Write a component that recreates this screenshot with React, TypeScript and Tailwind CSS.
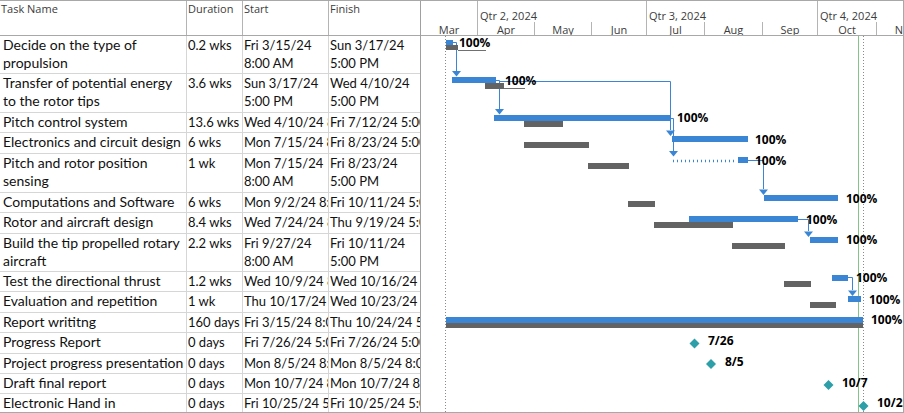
import React from "react";

type Row = {
  name: string[];
  dur: string;
  start: string[];
  finish: string[];
  h: string;
};

const rows: Row[] = [
  { name: ["Decide on the type of", "propulsion"], dur: "0.2 wks", start: ["Fri 3/15/24", "8:00 AM"], finish: ["Sun 3/17/24", "5:00 PM"], h: "h-[38px]" },
  { name: ["Transfer of potential energy", "to the rotor tips"], dur: "3.6 wks", start: ["Sun 3/17/24", "5:00 PM"], finish: ["Wed 4/10/24", "5:00 PM"], h: "h-[39px]" },
  { name: ["Pitch control system"], dur: "13.6 wks", start: ["Wed 4/10/24 8:00 AM"], finish: ["Fri 7/12/24 5:00 PM"], h: "h-[20px]" },
  { name: ["Electronics and circuit design"], dur: "6 wks", start: ["Mon 7/15/24 8:00 AM"], finish: ["Fri 8/23/24 5:00 PM"], h: "h-[21px]" },
  { name: ["Pitch and rotor position", "sensing"], dur: "1 wk", start: ["Mon 7/15/24", "8:00 AM"], finish: ["Fri 8/23/24", "5:00 PM"], h: "h-[39px]" },
  { name: ["Computations and Software"], dur: "6 wks", start: ["Mon 9/2/24 8:00 AM"], finish: ["Fri 10/11/24 5:00 PM"], h: "h-[20px]" },
  { name: ["Rotor and aircraft design"], dur: "8.4 wks", start: ["Wed 7/24/24 8:00 AM"], finish: ["Thu 9/19/24 5:00 PM"], h: "h-[21px]" },
  { name: ["Build the tip propelled rotary", "aircraft"], dur: "2.2 wks", start: ["Fri 9/27/24", "8:00 AM"], finish: ["Fri 10/11/24", "5:00 PM"], h: "h-[38px]" },
  { name: ["Test the directional thrust"], dur: "1.2 wks", start: ["Wed 10/9/24 8:00 AM"], finish: ["Wed 10/16/24 5:00 PM"], h: "h-[20px]" },
  { name: ["Evaluation and repetition"], dur: "1 wk", start: ["Thu 10/17/24 8:00 AM"], finish: ["Wed 10/23/24 5:00 PM"], h: "h-[21px]" },
  { name: ["Report writitng"], dur: "160 days", start: ["Fri 3/15/24 8:00 AM"], finish: ["Thu 10/24/24 5:00 PM"], h: "h-[20px]" },
  { name: ["Progress Report"], dur: "0 days", start: ["Fri 7/26/24 5:00 PM"], finish: ["Fri 7/26/24 5:00 PM"], h: "h-[21px]" },
  { name: ["Project progress presentation"], dur: "0 days", start: ["Mon 8/5/24 8:00 AM"], finish: ["Mon 8/5/24 8:00 AM"], h: "h-[20px]" },
  { name: ["Draft final report"], dur: "0 days", start: ["Mon 10/7/24 8:00 AM"], finish: ["Mon 10/7/24 8:00 AM"], h: "h-[20px]" },
  { name: ["Electronic Hand in"], dur: "0 days", start: ["Fri 10/25/24 5:00 PM"], finish: ["Fri 10/25/24 5:00 PM"], h: "flex-1 border-b-0" },
];

const months = [
  { l: "Mar", w: "w-[56px] border-l-0" },
  { l: "Apr", w: "w-[57px]" },
  { l: "May", w: "w-[57px]" },
  { l: "Jun", w: "w-[55px]" },
  { l: "Jul", w: "w-[58px]" },
  { l: "Aug", w: "w-[58px]" },
  { l: "Sep", w: "w-[55px]" },
  { l: "Oct", w: "w-[59px]" },
  { l: "Nov", w: "w-[57px]" },
];

const quarters = [
  { l: "", w: "w-[56px] border-l-0" },
  { l: "Qtr 2, 2024", w: "w-[169px]" },
  { l: "Qtr 3, 2024", w: "w-[171px]" },
  { l: "Qtr 4, 2024", w: "w-[100px]" },
];

const Cell = ({ lines, cls }: { lines: string[]; cls: string }) => (
  <div className={`${cls} h-full overflow-hidden whitespace-nowrap`}>
    {lines.map((t, i) => (
      <div key={i} className="leading-[18px] h-[18px]">
        {t}
      </div>
    ))}
  </div>
);

const BLUE = "#3a86d4";
const GRAY = "#636363";
const TEAL = "#2c9fa8";

const Arrow = ({ x, y }: { x: number; y: number }) => (
  <polygon points={`${x - 4.5},${y} ${x + 4.5},${y} ${x},${y + 5.5}`} fill={BLUE} />
);

const Label = ({ x, y, t }: { x: number; y: number; t: string }) => (
  <text x={x} y={y} fontFamily="'Open Sans', sans-serif" fontWeight={700} fontSize={12} fill="#000">
    {t}
  </text>
);

const Diamond = ({ x, y }: { x: number; y: number }) => (
  <polygon points={`${x},${y - 5} ${x + 5},${y} ${x},${y + 5} ${x - 5},${y}`} fill={TEAL} />
);

function Chart() {
  return (
    <svg width={482} height={376} viewBox="421 36 482 376" className="block">
      {/* project start / finish / status lines */}
      <line x1={445.5} y1={36} x2={445.5} y2={412} stroke="#8a8a8a" strokeDasharray="1 2" />
      <line x1={863.5} y1={36} x2={863.5} y2={412} stroke="#8a8a8a" strokeDasharray="1 2" />
      <line x1={858.5} y1={36} x2={858.5} y2={412} stroke="#86c486" />

      {/* connectors */}
      <g stroke={BLUE} fill="none" strokeWidth={1}>
        <path d="M453 42.5 H456.5 V71" />
        <path d="M496 80.5 H499.5 V109" />
        <path d="M499.5 81.5 H670.5 V130" />
        <path d="M670 118.5 H673.5 V151" />
        <path d="M748 160.5 H763.5 V189" />
        <path d="M798 219.5 H808.5 V231" />
        <path d="M848 277.5 H852.5 V290" />
      </g>
      <Arrow x={456.5} y={71} />
      <Arrow x={499.5} y={109} />
      <Arrow x={670.5} y={130.5} />
      <Arrow x={673.5} y={151} />
      <Arrow x={763.5} y={189.5} />
      <Arrow x={808.5} y={231.5} />
      <Arrow x={852.5} y={290.5} />

      {/* thin baseline slack lines */}
      <line x1={458} y1={50.5} x2={486} y2={50.5} stroke="#707070" />
      <line x1={504} y1={88.5} x2={525} y2={88.5} stroke="#707070" />

      {/* bars */}
      <rect x={446} y={40} width={7} height={5} fill={BLUE} />
      <rect x={446} y={45} width={12} height={5} fill={GRAY} />

      <rect x={452} y={77} width={44} height={6} fill={BLUE} />
      <rect x={485} y={83} width={19} height={6} fill={GRAY} />

      <rect x={494} y={115} width={176} height={6} fill={BLUE} />
      <rect x={524} y={121} width={39} height={6} fill={GRAY} />

      <rect x={672} y={136} width={76} height={6} fill={BLUE} />
      <rect x={524} y={142} width={65} height={6} fill={GRAY} />

      <line x1={673} y1={161} x2={737} y2={161} stroke={BLUE} strokeWidth={2.5} strokeDasharray="1 3" />
      <rect x={738} y={157} width={10} height={6} fill={BLUE} />
      <rect x={588} y={163} width={41} height={6} fill={GRAY} />

      <rect x={764} y={195} width={74} height={6} fill={BLUE} />
      <rect x={628} y={201} width={27} height={6} fill={GRAY} />

      <rect x={689} y={216} width={109} height={6} fill={BLUE} />
      <rect x={654} y={222} width={79} height={6} fill={GRAY} />

      <rect x={810} y={237} width={28} height={6} fill={BLUE} />
      <rect x={732} y={243} width={53} height={6} fill={GRAY} />

      <rect x={832} y={275} width={16} height={6} fill={BLUE} />
      <rect x={784} y={281} width={27} height={6} fill={GRAY} />

      <rect x={848} y={296} width={13} height={6} fill={BLUE} />
      <rect x={810} y={302} width={26} height={6} fill={GRAY} />

      <rect x={446} y={317} width={417} height={6} fill={BLUE} />
      <rect x={446} y={323} width={417} height={5} fill={GRAY} />

      <Diamond x={694.5} y={343.5} />
      <Diamond x={711} y={364} />
      <Diamond x={828.5} y={385} />
      <Diamond x={863.5} y={406} />

      {/* labels */}
      <Label x={459} y={47} t="100%" />
      <Label x={505} y={85} t="100%" />
      <Label x={677} y={122} t="100%" />
      <Label x={755} y={144} t="100%" />
      <Label x={755} y={165} t="100%" />
      <Label x={846} y={203} t="100%" />
      <Label x={806} y={224} t="100%" />
      <Label x={846} y={244} t="100%" />
      <Label x={856} y={282} t="100%" />
      <Label x={869} y={304} t="100%" />
      <Label x={871} y={324} t="100%" />
      <Label x={708} y={345} t="7/26" />
      <Label x={725} y={366} t="8/5" />
      <Label x={842} y={387} t="10/7" />
      <Label x={877} y={407} t="10/25" />
    </svg>
  );
}

export default function App() {
  const hdr = "font-['Open_Sans',sans-serif] text-[11px] text-[#3c3c3c]";
  const body = "font-['Lato',sans-serif] text-[14px] text-[#111]";
  return (
    <div className="w-[904px] h-[413px] bg-white border-t border-b border-r border-[#a8a8a8] flex overflow-hidden">
      {/* table */}
      <div className="w-[420px] flex flex-col shrink-0">
        <div className={`h-[35px] flex border-b border-[#a8a8a8] ${hdr} leading-[13px]`}>
          <div className="w-[187px] border-r border-[#b4b4b4] pl-[1px] pt-[1px]">Task Name</div>
          <div className="w-[56px] border-r border-[#b4b4b4] pl-[1px] pt-[1px]">Duration</div>
          <div className="w-[86px] border-r border-[#b4b4b4] pl-[1px] pt-[1px]">Start</div>
          <div className="w-[91px] pl-[1px] pt-[1px]">Finish</div>
        </div>
        <div className={`flex-1 flex flex-col ${body}`}>
          {rows.map((r, i) => (
            <div key={i} className={`${r.h} flex border-b border-[#d6d6d6] overflow-hidden`}>
              <Cell lines={r.name} cls="w-[187px] border-r border-[#d6d6d6] pl-[3px]" />
              <Cell lines={[r.dur]} cls="w-[56px] border-r border-[#d6d6d6] pl-[1px] text-[13px]" />
              <Cell lines={r.start} cls="w-[86px] border-r border-[#d6d6d6] pl-[1px] text-[13px]" />
              <Cell lines={r.finish} cls="w-[91px] pl-[1px] text-[13px]" />
            </div>
          ))}
        </div>
      </div>
      {/* gantt */}
      <div className="flex-1 flex flex-col border-l border-[#a0a0a0] overflow-hidden">
        <div className={`h-[35px] border-b border-[#a8a8a8] ${hdr} overflow-hidden shrink-0`}>
          <div className="h-[21px] flex whitespace-nowrap">
            {quarters.map((q, i) => (
              <div key={i} className={`${q.w} shrink-0 border-l border-[#b4b4b4] pl-[2px] pt-[8px] leading-[14px]`}>
                {q.l}
              </div>
            ))}
          </div>
          <div className="h-[13px] flex whitespace-nowrap">
            {months.map((m, i) => (
              <div key={i} className={`${m.w} shrink-0 border-l border-[#b4b4b4] text-center pt-[1px] leading-[14px]`}>
                {m.l}
              </div>
            ))}
          </div>
        </div>
        <Chart />
      </div>
    </div>
  );
}
